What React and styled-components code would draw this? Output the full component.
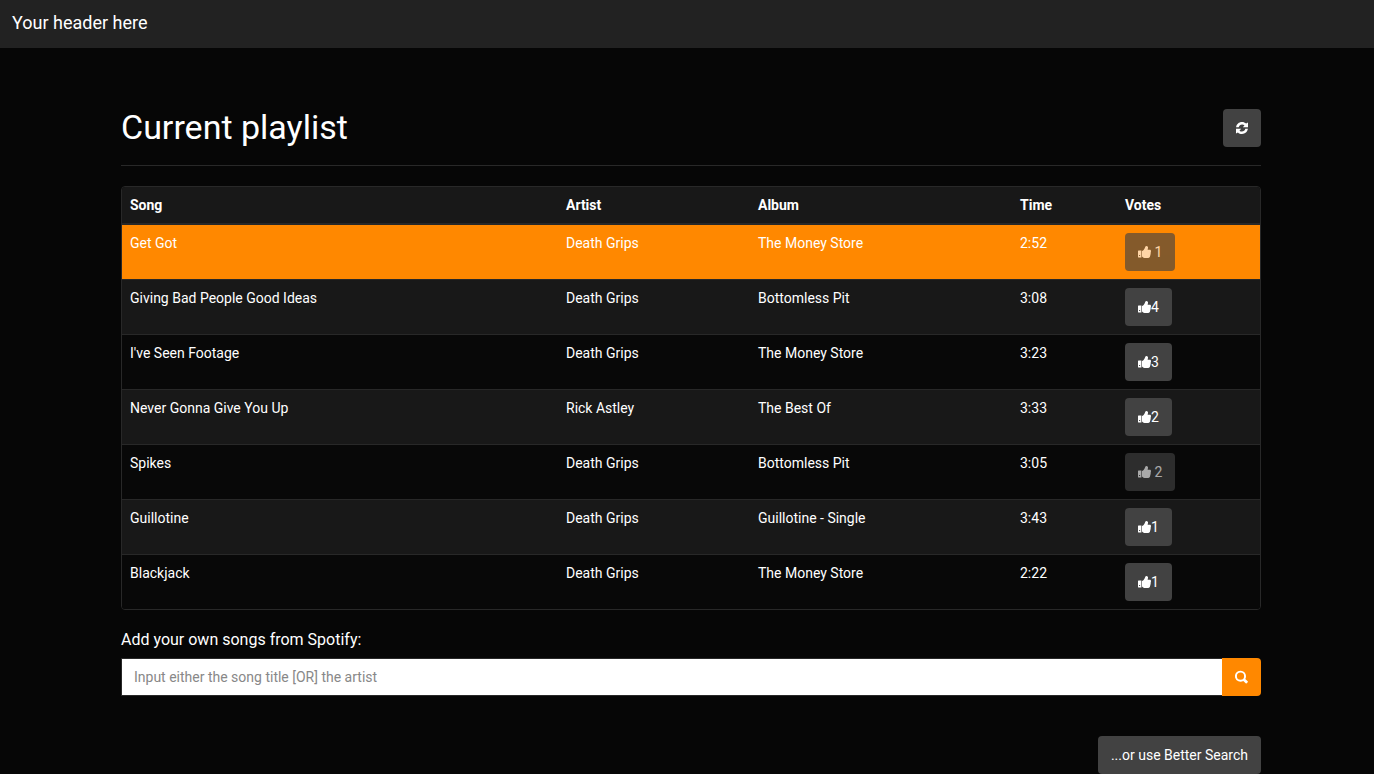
import React from "react";
import styled, { createGlobalStyle } from "styled-components";

const GlobalStyle = createGlobalStyle`
  *, *::before, *::after { box-sizing: border-box; }
  body {
    margin: 0;
    background: #060606;
    color: #fff;
    font-family: Roboto, "Liberation Sans", sans-serif;
    font-size: 14px;
    line-height: 20px;
  }
  button, input { font: inherit; }
`;

const Header = styled.header`
  height: 48px;
  padding: 12px;
  background: #222;
  font-size: 18px;
  line-height: 22px;
`;

const Main = styled.main`
  max-width: 1170px;
  margin: 0 auto;
  padding: 60px 11px 0 19px;
`;

const TitleBar = styled.div`
  display: flex;
  align-items: center;
  justify-content: space-between;
  padding-bottom: 17px;
  margin-bottom: 20px;
  border-bottom: 1px solid #282828;
`;

const Title = styled.h1`
  margin: 0;
  padding-bottom: 2px;
  font-size: 34px;
  line-height: 38px;
  font-weight: 400;
`;

const Button = styled.button`
  display: inline-flex;
  align-items: center;
  height: 38px;
  padding: 0 13px;
  border: 0;
  border-radius: 4px;
  background: #424242;
  color: #fff;
  white-space: pre;
  cursor: pointer;

  &:disabled {
    opacity: 0.65;
    cursor: not-allowed;
  }
`;

const RefreshButton = styled(Button)`
  padding: 0 12px;
`;

const SearchButton = styled(Button)`
  border-radius: 0 4px 4px 0;
  background: #ff8800;
`;

const Glyph = styled.svg`
  display: block;
  flex: none;
  fill: currentColor;
`;

const Frame = styled.div`
  border: 1px solid #282828;
  border-radius: 4px;
  overflow: hidden;
`;

const Table = styled.table`
  width: 100%;
  border-collapse: separate;
  border-spacing: 0;
  table-layout: fixed;
`;

const HeadCell = styled.th`
  width: ${(p) => p.$width};
  padding: 8px;
  border-bottom: 2px solid #282828;
  background: #181818;
  text-align: left;
  font-weight: 700;
`;

const Row = styled.tr`
  background: ${(p) => (p.$playing ? "#ff8800" : p.$shaded ? "#181818" : "#080808")};
`;

const Cell = styled.td`
  height: ${(p) => (p.$first ? "54px" : "55px")};
  padding: 8px;
  border-top: ${(p) => (p.$first ? "0" : "1px solid #282828")};
  vertical-align: top;
`;

const SearchLabel = styled.label`
  display: block;
  margin: 20px 0 8px;
  font-size: 16px;
`;

const SearchForm = styled.form`
  display: flex;
`;

const SearchInput = styled.input`
  flex: 1;
  min-width: 0;
  height: 38px;
  padding: 0 12px;
  border: 1px solid #282828;
  border-right: 0;
  border-radius: 0;
  background: #fff;
  color: #888;

  &::placeholder {
    color: #888;
    opacity: 1;
  }
`;

const Footer = styled.div`
  display: flex;
  justify-content: flex-end;
  margin-top: 40px;
`;

const ThumbsUp = () => (
  <Glyph width="13" height="14" viewBox="0 0 13 14" aria-hidden="true">
    <path
      fillRule="evenodd"
      d="M.4 5.6h3v6.9h-3a.4.4 0 0 1-.4-.4V6a.4.4 0 0 1 .4-.4zM1.1 10v1.1h1V10z"
    />
    <path d="M4 6C5.6 5.4 6.7 3.7 7.2 1.9 7.4 1.2 7.8.9 8.4.9c1.3 0 1.8 1 1.6 2.1L9.6 4.7h2.2c.8 0 1.2.6 1.2 1.3 0 .5-.1.9-.3 1.3.2.6.1 1.2-.2 1.7.1.6 0 1.2-.4 1.7 0 1.3-.7 2.1-1.9 2.3H7.5c-1.5 0-2.3-.4-2.9-1.1L4 11.6z" />
  </Glyph>
);

const Refresh = () => (
  <Glyph width="14" height="14" viewBox="0 0 14 14" aria-hidden="true">
    <path d="M1.1 6.2C1.5 3.2 3.9 1 7 1c1.6 0 3 .6 4.1 1.6L13 1.4v4.8H7.9l1.6-1.9C8.8 3.7 8 3.4 7.1 3.4c-1.7 0-3 1.1-3.4 2.8z" />
    <path d="M12.9 7.8c-.4 3-2.8 5.2-5.9 5.2-1.6 0-3-.6-4.1-1.6L1 12.6V7.8h5.1L4.5 9.7c.7.6 1.5.9 2.4.9 1.7 0 3-1.1 3.4-2.8z" />
  </Glyph>
);

const Search = () => (
  <Glyph width="13" height="14" viewBox="0 0 13 14" aria-hidden="true">
    <path
      fillRule="evenodd"
      d="M5.5.7a5.5 5.5 0 1 0 2.8 10.2l2.4 2.4c.3.3.7.3 1 0l1-1c.3-.3.3-.7 0-1l-2.4-2.4A5.5 5.5 0 0 0 5.5.7zm0 1.9a3.6 3.6 0 1 1 0 7.2 3.6 3.6 0 0 1 0-7.2z"
    />
  </Glyph>
);

const columns = [
  ["Song", "436px"],
  ["Artist", "192px"],
  ["Album", "262px"],
  ["Time", "105px"],
  ["Votes", "auto"],
];

const songs = [
  { title: "Get Got", artist: "Death Grips", album: "The Money Store", time: "2:52", votes: 1, voted: true, playing: true },
  { title: "Giving Bad People Good Ideas", artist: "Death Grips", album: "Bottomless Pit", time: "3:08", votes: 4 },
  { title: "I've Seen Footage", artist: "Death Grips", album: "The Money Store", time: "3:23", votes: 3 },
  { title: "Never Gonna Give You Up", artist: "Rick Astley", album: "The Best Of", time: "3:33", votes: 2 },
  { title: "Spikes", artist: "Death Grips", album: "Bottomless Pit", time: "3:05", votes: 2, voted: true },
  { title: "Guillotine", artist: "Death Grips", album: "Guillotine - Single", time: "3:43", votes: 1 },
  { title: "Blackjack", artist: "Death Grips", album: "The Money Store", time: "2:22", votes: 1 },
];

export default function App() {
  return (
    <>
      <GlobalStyle />
      <Header>Your header here</Header>
      <Main>
        <TitleBar>
          <Title>Current playlist</Title>
          <RefreshButton type="button" aria-label="Refresh playlist">
            <Refresh />
          </RefreshButton>
        </TitleBar>
        <Frame>
          <Table>
            <thead>
              <tr>
                {columns.map(([name, width]) => (
                  <HeadCell key={name} $width={width} scope="col">
                    {name}
                  </HeadCell>
                ))}
              </tr>
            </thead>
            <tbody>
              {songs.map((song, i) => (
                <Row key={song.title} $playing={song.playing} $shaded={i % 2 === 1}>
                  <Cell $first={i === 0}>{song.title}</Cell>
                  <Cell $first={i === 0}>{song.artist}</Cell>
                  <Cell $first={i === 0}>{song.album}</Cell>
                  <Cell $first={i === 0}>{song.time}</Cell>
                  <Cell $first={i === 0}>
                    <Button type="button" disabled={song.voted}>
                      <ThumbsUp />
                      {song.voted ? ` ${song.votes}` : song.votes}
                    </Button>
                  </Cell>
                </Row>
              ))}
            </tbody>
          </Table>
        </Frame>
        <SearchLabel htmlFor="song-search">Add your own songs from Spotify:</SearchLabel>
        <SearchForm onSubmit={(e) => e.preventDefault()}>
          <SearchInput
            id="song-search"
            type="text"
            placeholder="Input either the song title [OR] the artist"
          />
          <SearchButton type="submit" aria-label="Search">
            <Search />
          </SearchButton>
        </SearchForm>
        <Footer>
          <Button type="button">...or use Better Search</Button>
        </Footer>
      </Main>
    </>
  );
}
